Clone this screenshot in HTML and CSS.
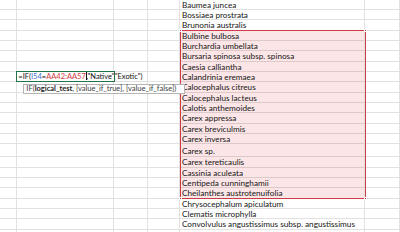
FILE: index.html
```html
<!DOCTYPE html>
<html lang="en">
<head>
    <meta charset="UTF-8">
    <title>Sheet - IF formula</title>
    <link rel="stylesheet" href="styles.css">
</head>
<body>

    <div class="sheet">
        <div class="row first"><i></i><i></i><i></i><i></i><span class="name">Baumea juncea</span><i></i></div>
        <div class="row"><i></i><i></i><i></i><i></i><span class="name">Bossiaea prostrata</span><i></i></div>
        <div class="row"><i></i><i></i><i></i><i></i><span class="name">Brunonia australis</span><i></i></div>
        <div class="row"><i></i><i></i><i></i><i></i><span class="name hl">Bulbine bulbosa</span><i></i></div>
        <div class="row"><i></i><i></i><i></i><i></i><span class="name hl">Burchardia umbellata</span><i></i></div>
        <div class="row"><i></i><i></i><i></i><i></i><span class="name hl">Bursaria spinosa subsp. spinosa</span><i></i></div>
        <div class="row"><i></i><i></i><i></i><i></i><span class="name hl">Caesia calliantha</span><i></i></div>
        <div class="row">
            <i></i>
            <i class="editing">
                <span class="formula">=IF(<b class="ref-blue">I54</b>=<b class="ref-red">AA42:AA57</b><em class="caret"></em>,"Native","Exotic")</span>
                <span class="tip">IF(<strong>logical_test</strong>, [value_if_true], [value_if_false])</span>
            </i>
            <i></i><i></i><span class="name hl">Calandrinia eremaea</span><i></i>
        </div>
        <div class="row"><i></i><i></i><i></i><i></i><span class="name hl">Calocephalus citreus</span><i></i></div>
        <div class="row"><i></i><i></i><i></i><i></i><span class="name hl">Calocephalus lacteus</span><i></i></div>
        <div class="row"><i></i><i></i><i></i><i></i><span class="name hl">Calotis anthemoides</span><i></i></div>
        <div class="row"><i></i><i></i><i></i><i></i><span class="name hl">Carex appressa</span><i></i></div>
        <div class="row"><i></i><i></i><i></i><i></i><span class="name hl">Carex breviculmis</span><i></i></div>
        <div class="row"><i></i><i></i><i></i><i></i><span class="name hl">Carex inversa</span><i></i></div>
        <div class="row tall"><i></i><i></i><i></i><i></i><span class="name hl">Carex sp.</span><i></i></div>
        <div class="row"><i></i><i></i><i></i><i></i><span class="name hl">Carex tereticaulis</span><i></i></div>
        <div class="row"><i></i><i></i><i></i><i></i><span class="name hl">Cassinia aculeata</span><i></i></div>
        <div class="row"><i></i><i></i><i></i><i></i><span class="name hl">Centipeda cunninghamii</span><i></i></div>
        <div class="row"><i></i><i></i><i></i><i></i><span class="name hl">Cheilanthes austrotenuifolia</span><i></i></div>
        <div class="row"><i></i><i></i><i></i><i></i><span class="name">Chrysocephalum apiculatum</span><i></i></div>
        <div class="row"><i></i><i></i><i></i><i></i><span class="name">Clematis microphylla</span><i></i></div>
        <div class="row"><i></i><i></i><i></i><i></i><span class="name">Convolvulus angustissimus subsp. angustissimus</span><i></i></div>
        <div class="row"><i></i><i></i><i></i><i></i><span class="name"></span><i></i></div>

        <!-- outline of the referenced range AA42:AA57 -->
        <div class="range">
            <span class="knob tl"></span>
            <span class="knob tr"></span>
            <span class="knob bl"></span>
            <span class="knob br"></span>
        </div>
    </div>

</body>
</html>
```

FILE: styles.css
```css
* {
    margin: 0;
    padding: 0;
    box-sizing: border-box;
}

body {
    background: #fff;
    font-family: 'Lato', 'Liberation Sans', sans-serif;
    color: #161616;
    overflow: hidden;
}

.sheet {
    position: relative;
    width: 400px;
}

.row {
    display: grid;
    grid-template-columns: 17.3px 97px 33.4px 32.3px 185.3px 1fr;
    height: 10.33px;
}

.row.first {
    height: 10px;
}

.row.tall {
    height: 13px;
}

.row i,
.row .name {
    display: block;
    font-style: normal;
    border-right: 1px solid #e1e1e1;
    border-bottom: 1px solid #e1e1e1;
}

.name {
    font-size: 8.2px;
    line-height: 10px;
    padding-left: 2px;
    white-space: nowrap;
    overflow: hidden;
}

.row.tall .name {
    line-height: 15px;
}

.name.hl {
    background: #fbe5e6;
    border-bottom-color: #dcc9ca;
}

/* cell in edit mode */
.editing {
    position: relative;
    z-index: 3;
}

.editing::after {
    content: '';
    position: absolute;
    left: -1px;
    top: -1px;
    right: -2px;
    bottom: -1px;
    border: 1.4px solid #217346;
    pointer-events: none;
}

.formula {
    position: absolute;
    left: 1px;
    top: 0;
    height: 9.3px;
    padding-right: 2px;
    background: #fff;
    font-size: 7.5px;
    line-height: 10px;
    white-space: nowrap;
    color: #111;
}

.formula b {
    font-weight: normal;
}

.ref-blue {
    color: #3a6fc4;
}

.ref-red {
    color: #d03a41;
}

.caret {
    display: inline-block;
    width: 0.8px;
    height: 8px;
    background: #111;
    vertical-align: -1px;
}

.tip {
    position: absolute;
    left: 6px;
    top: 12.3px;
    width: 162px;
    height: 9.3px;
    padding-left: 2px;
    background: #fff;
    border: 1px solid #b4b4b4;
    font-size: 7.5px;
    line-height: 7.4px;
    color: #3c3c3c;
    white-space: nowrap;
    z-index: 4;
}

.tip strong {
    color: #222;
}

.range {
    position: absolute;
    left: 179.6px;
    top: 30.2px;
    width: 186px;
    height: 168.8px;
    border: 1.2px solid #cb3c44;
    pointer-events: none;
    z-index: 2;
}

.knob {
    position: absolute;
    width: 3px;
    height: 3px;
    background: #c42e37;
    border: 0.5px solid #fff;
}

.knob.tl { left: -2px; top: -2px; }
.knob.tr { right: -2px; top: -2px; }
.knob.bl { left: -2px; bottom: -2px; }
.knob.br { right: -2px; bottom: -2px; }
```
